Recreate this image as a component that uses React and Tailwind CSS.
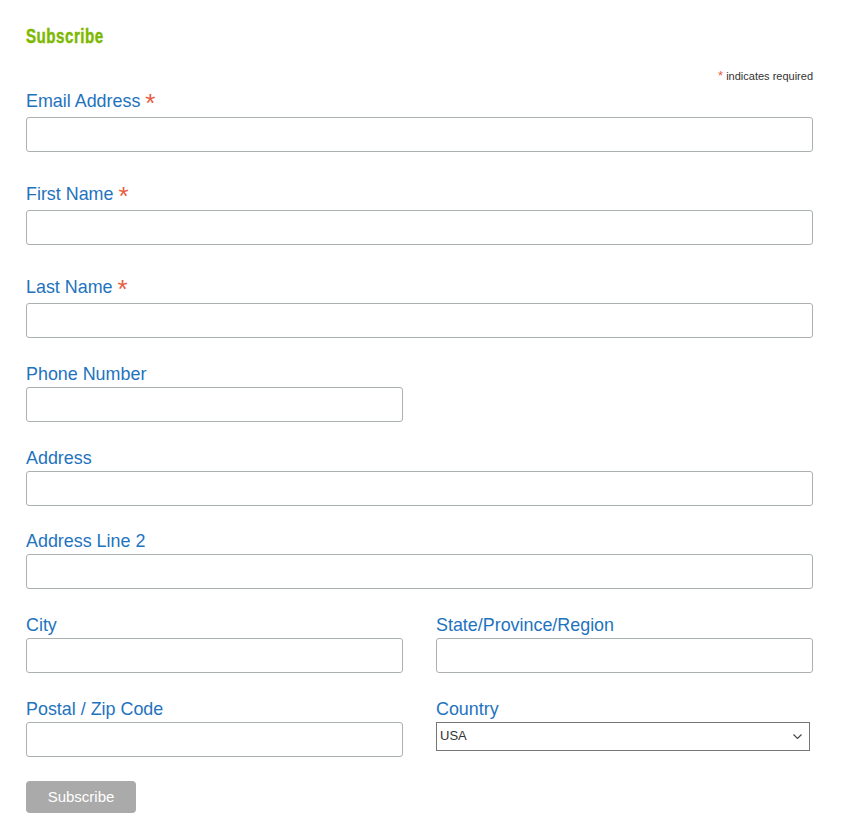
import React from "react";

const labelCls = "block text-[17.9px] leading-[20px] text-[#1e73be]";
const inputCls = "block w-full h-[35px] border border-[#abb0b2] rounded-[3px] bg-white";

function Req() {
  return (
    <>
      {" "}
      <span className="text-[#e85c41] text-[26px] leading-[0] relative top-[5px]">*</span>
    </>
  );
}

function Field({ label, required, className = "" }) {
  return (
    <div className={"mb-[25.7px] " + className}>
      <label className={labelCls + (required ? " pt-[6.6px] mb-[6px]" : " mb-[3px]")}>
        {label}
        {required && <Req />}
      </label>
      <input className={inputCls} type="text" />
    </div>
  );
}

export default function App() {
  return (
    <div className="min-h-[833px] w-[846px] bg-white" style={{ fontFamily: '"Liberation Sans", Arial, sans-serif' }}>
      <div className="ml-[26px] w-[787px] pt-[24px]">
        <h2 className="h-[24px] text-[20px] leading-[24px] font-bold text-[#7cb800]">
          <span className="inline-block origin-left scale-x-[0.76] tracking-[0.6px] [-webkit-text-stroke:0.4px_#7cb800]">Subscribe</span>
        </h2>
        <div className="mt-[21px] h-[13px] text-right text-[11px] leading-[13px] text-[#333]">
          <span className="text-[#e85c41] text-[13px]">*</span> indicates required
        </div>
        <div className="mt-[2.1px]">
          <Field label="Email Address" required />
          <Field label="First Name" required />
          <Field label="Last Name" required />
          <div className="w-[377px]">
            <Field label="Phone Number" />
          </div>
          <Field label="Address" />
          <Field label="Address Line 2" />
          <div className="grid grid-cols-[377px_377px] gap-x-[33px]">
            <Field label="City" />
            <Field label="State/Province/Region" />
            <div>
              <label className={labelCls + " mb-[3px]"}>Postal / Zip Code</label>
              <input className={inputCls} type="text" />
            </div>
            <div>
              <label className={labelCls + " mb-[3px]"}>Country</label>
              <div className="relative w-[374px]">
                <select className="block w-full h-[29px] border border-[#767676] bg-white pl-[3px] text-[13px] text-[#333] appearance-none outline-none">
                  <option>USA</option>
                </select>
                <svg className="absolute right-[8px] top-[12px] pointer-events-none" width="9" height="5" viewBox="0 0 9 5">
                  <path d="M0.5 0.5 L4.5 4.5 L8.5 0.5" fill="none" stroke="#444" strokeWidth="1.1" />
                </svg>
              </div>
            </div>
          </div>
          <button className="mt-[24px] h-[32px] w-[110px] rounded-[4px] bg-[#aaaaaa] pt-[1px] text-[15px] text-white">
            Subscribe
          </button>
        </div>
      </div>
    </div>
  );
}
